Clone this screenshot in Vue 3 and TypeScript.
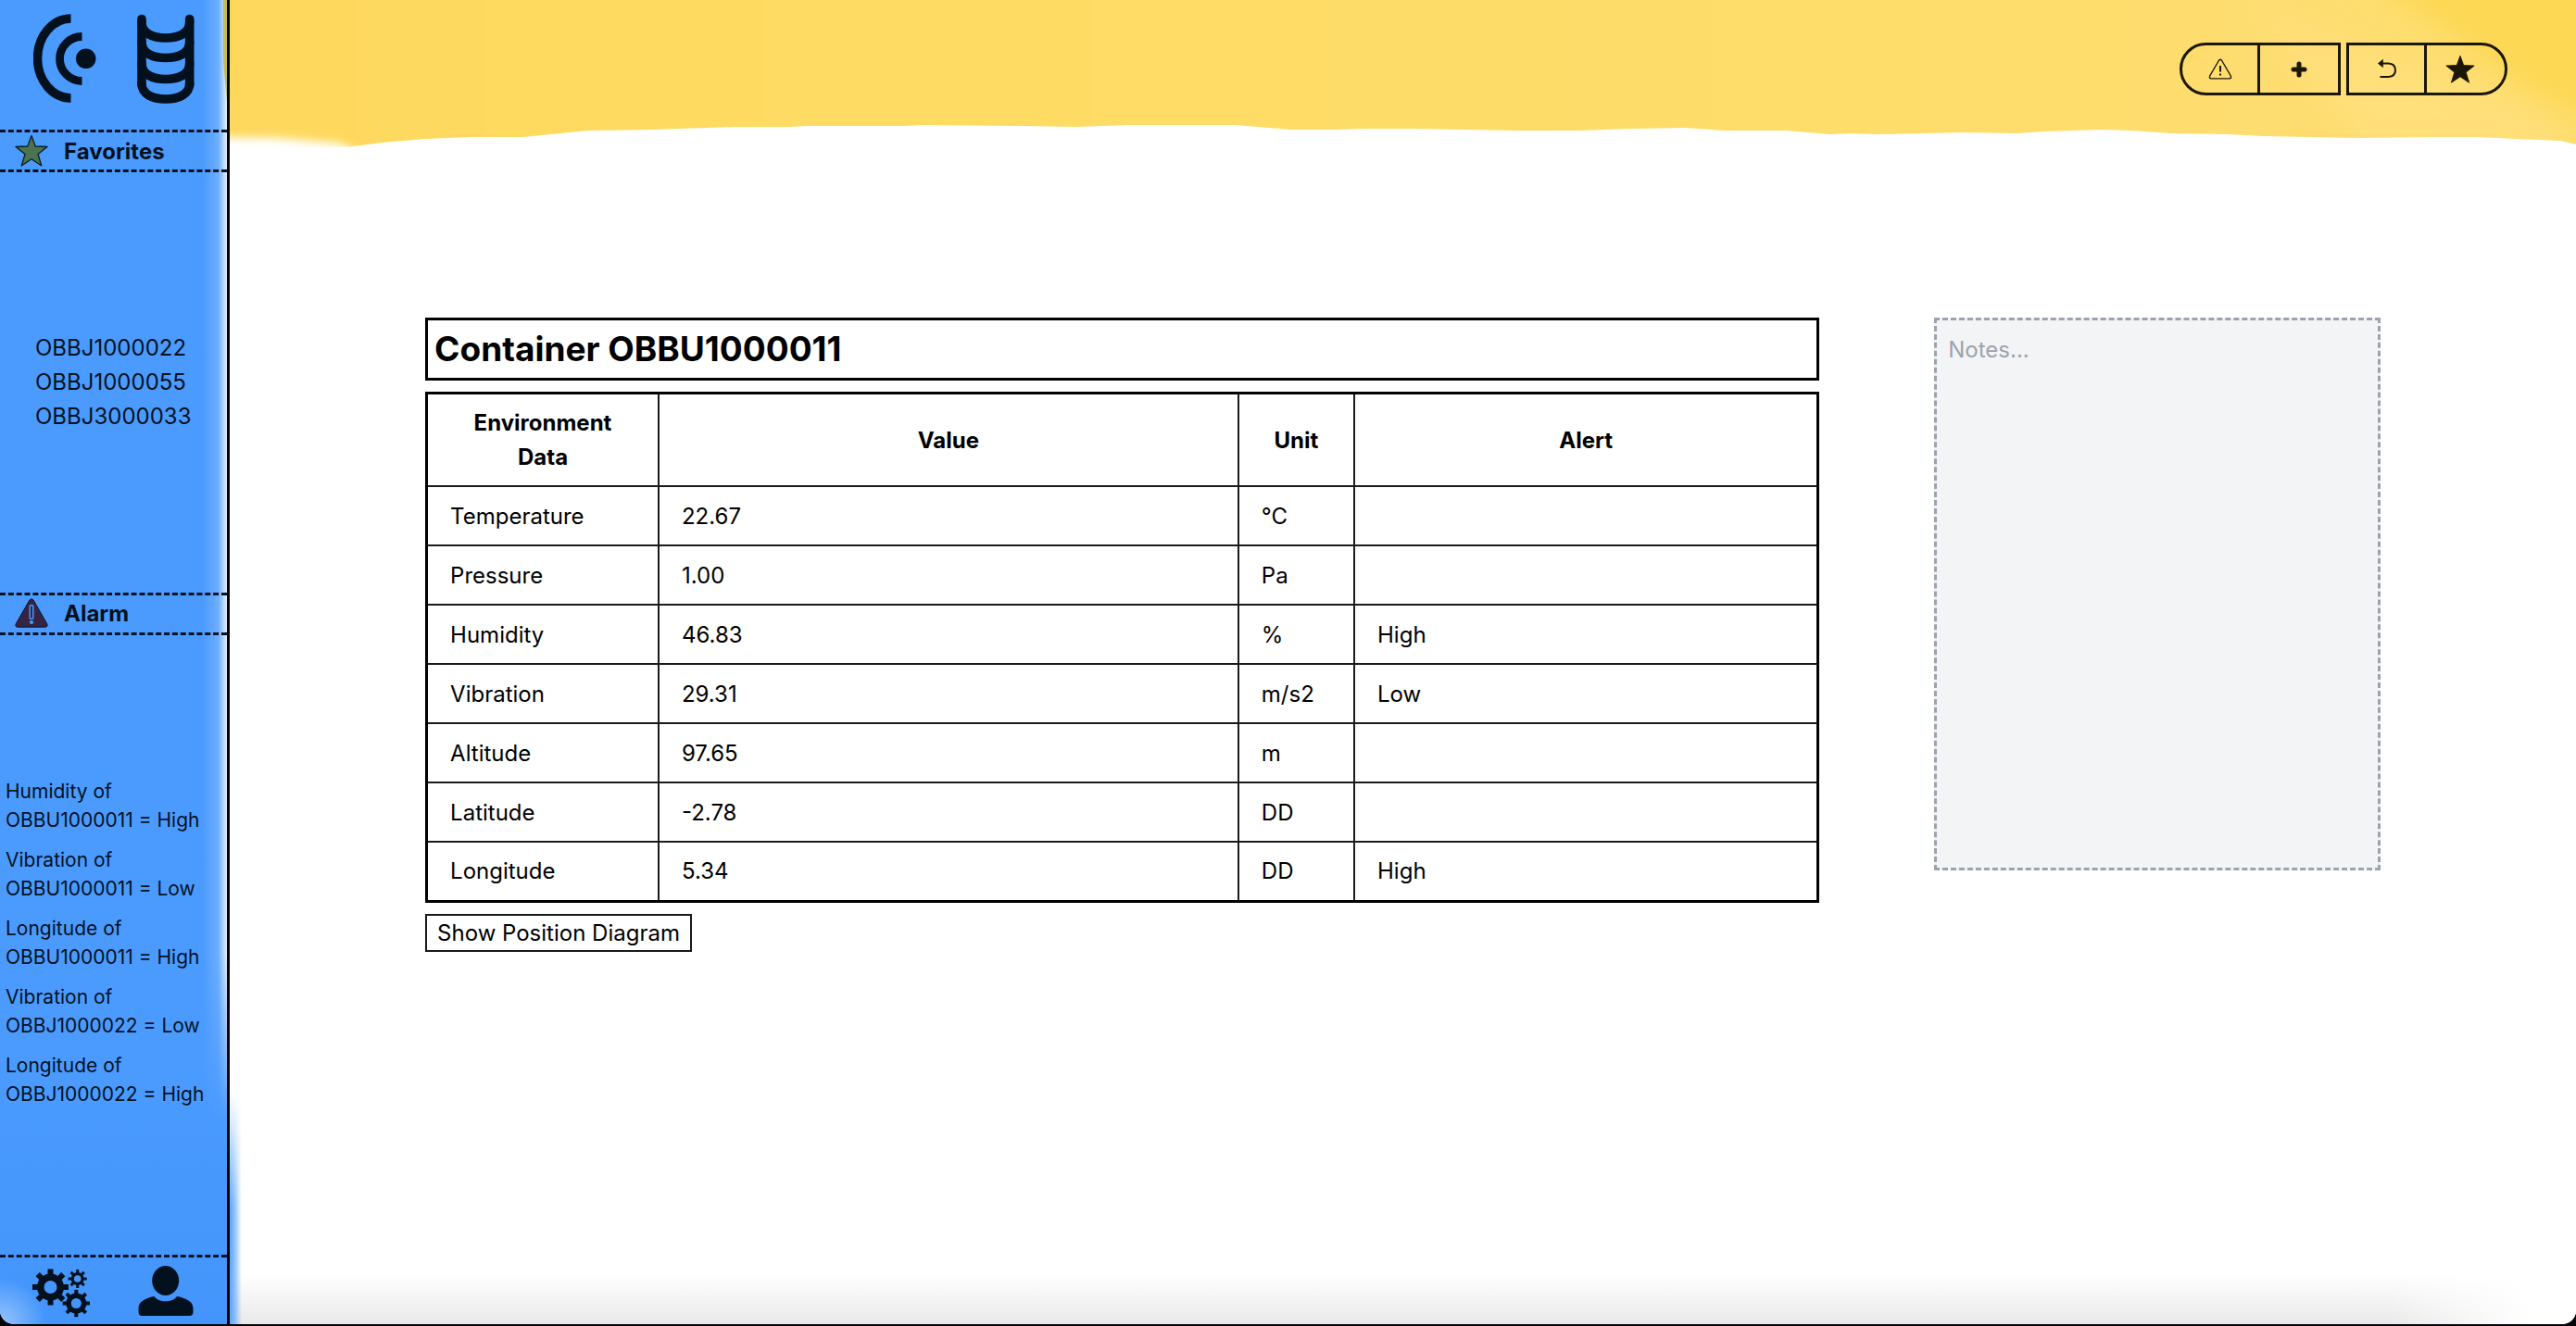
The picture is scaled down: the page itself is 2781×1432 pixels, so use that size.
<script setup lang="ts">
import { ref } from 'vue'

interface Reading {
  name: string
  value: string
  unit: string
  alert: string
}

interface Gear {
  cx: number
  cy: number
  body: number
  outer: number
  hole: number
  tooth: number
}

const containerId = 'OBBU1000011'
const notes = ref('')

const favorites: string[] = ['OBBJ1000022', 'OBBJ1000055', 'OBBJ3000033']

const alarms: { metric: string; id: string; level: string }[] = [
  { metric: 'Humidity', id: 'OBBU1000011', level: 'High' },
  { metric: 'Vibration', id: 'OBBU1000011', level: 'Low' },
  { metric: 'Longitude', id: 'OBBU1000011', level: 'High' },
  { metric: 'Vibration', id: 'OBBJ1000022', level: 'Low' },
  { metric: 'Longitude', id: 'OBBJ1000022', level: 'High' },
]

const readings: Reading[] = [
  { name: 'Temperature', value: '22.67', unit: '°C', alert: '' },
  { name: 'Pressure', value: '1.00', unit: 'Pa', alert: '' },
  { name: 'Humidity', value: '46.83', unit: '%', alert: 'High' },
  { name: 'Vibration', value: '29.31', unit: 'm/s2', alert: 'Low' },
  { name: 'Altitude', value: '97.65', unit: 'm', alert: '' },
  { name: 'Latitude', value: '-2.78', unit: 'DD', alert: '' },
  { name: 'Longitude', value: '5.34', unit: 'DD', alert: 'High' },
]

const gears: Gear[] = [
  { cx: 19.5, cy: 23, body: 14.5, outer: 19.5, hole: 7, tooth: 6 },
  { cx: 48.7, cy: 14, body: 7, outer: 10, hole: 3.8, tooth: 3 },
  { cx: 47.3, cy: 40.5, body: 11, outer: 14.7, hole: 5.5, tooth: 4 },
]

const teeth = [0, 45, 90, 135]
const barrelLevels = [29, 50.5, 73.5, 95]
</script>

<template>
  <div class="app">
    <aside class="sidebar">
      <nav class="nav-top">
        <button class="icon-btn" aria-label="Sensors">
          <svg width="68" height="102" viewBox="0 0 68 102" fill="none" stroke="currentColor">
            <path d="M40.5 8 A36 43 0 0 0 40.5 94" stroke-width="9.5" />
            <path d="M52.5 27.5 A24 24 0 0 0 52.5 75.5" stroke-width="8.8" />
            <circle cx="56.7" cy="51.3" r="10.8" fill="currentColor" stroke="none" />
          </svg>
        </button>
        <button class="icon-btn" aria-label="Containers">
          <svg width="62" height="102" viewBox="0 0 62 102" fill="none" stroke="currentColor" stroke-width="9.6" stroke-linecap="round">
            <path d="M5 8.5 V80 M56.7 8.5 V80" />
            <path
              v-for="y in barrelLevels"
              :key="y"
              :d="`M5 ${y - 17} C5 ${y - 5} 17 ${y} 30.8 ${y} S56.7 ${y - 5} 56.7 ${y - 17}`"
            />
          </svg>
        </button>
      </nav>

      <h2 class="band">
        <svg width="36" height="36" viewBox="0 0 36 36">
          <path
            d="M18 1.5 L22.2 13 L35 13.5 L25 21.5 L28.8 34 L18 26.8 L7.2 34 L11 21.5 L1 13.5 L13.8 13 Z"
            fill="#4c7350" stroke="#0b1c22" stroke-width="1.3" stroke-linejoin="round"
          />
        </svg>
        Favorites
      </h2>
      <div class="list-area favorites">
        <ul>
          <li v-for="id in favorites" :key="id">{{ id }}</li>
        </ul>
      </div>

      <h2 class="band">
        <svg width="36" height="36" viewBox="0 0 36 36">
          <path
            d="M15.8 3.2 Q18 .2 20.2 3.2 L34.8 28.8 Q36 32 32.8 32.2 H3.2 Q0 32 1.2 28.8 Z"
            fill="#352444" stroke="#0b1626" stroke-width="1"
          />
          <rect x="16.2" y="8.8" width="3.6" height="14.5" rx="1" fill="#352444" stroke="#4c9dff" stroke-width="1.4" />
          <circle cx="18" cy="27" r="2.1" fill="#4c9dff" />
        </svg>
        Alarm
      </h2>
      <div class="list-area alarms">
        <ul>
          <li v-for="(a, i) in alarms" :key="i">
            {{ a.metric }} of<br />{{ a.id }} = {{ a.level }}
          </li>
        </ul>
      </div>

      <nav class="nav-bottom">
        <button class="icon-btn" aria-label="Settings">
          <svg width="62" height="56" viewBox="0 0 62 56">
            <defs>
              <mask id="gear-holes">
                <rect width="62" height="56" fill="#fff" />
                <circle v-for="g in gears" :key="g.cx" :cx="g.cx" :cy="g.cy" :r="g.hole" fill="#000" />
              </mask>
            </defs>
            <g mask="url(#gear-holes)" fill="currentColor">
              <template v-for="g in gears" :key="g.cx">
                <circle :cx="g.cx" :cy="g.cy" :r="g.body" />
                <rect
                  v-for="t in teeth"
                  :key="t"
                  :x="g.cx - g.tooth / 2"
                  :y="g.cy - g.outer"
                  :width="g.tooth"
                  :height="g.outer * 2"
                  :transform="`rotate(${t} ${g.cx} ${g.cy})`"
                />
              </template>
            </g>
          </svg>
        </button>
        <button class="icon-btn" aria-label="Account">
          <svg width="60" height="56" viewBox="0 0 60 56" fill="currentColor">
            <ellipse cx="29.7" cy="16" rx="14.5" ry="16" />
            <path d="M17.5 33 C22 40 37.5 40 42 33 C53 35 59.5 39 59.5 46 V50 Q59.5 54 55.5 54 H4.5 Q.5 54 .5 50 V46 C.5 39 7 35 17.5 33 Z" />
          </svg>
        </button>
      </nav>
    </aside>

    <div class="page">
      <header class="topbar">
        <svg class="paint" viewBox="0 0 2533 160" preserveAspectRatio="none" aria-hidden="true">
          <defs>
            <linearGradient id="wash">
              <stop offset="0" stop-color="#fed85c" />
              <stop offset=".3" stop-color="#fedb63" />
              <stop offset=".7" stop-color="#fedd6b" />
              <stop offset="1" stop-color="#fede72" />
            </linearGradient>
            <filter id="soft" x="-10%" y="-50%" width="120%" height="200%">
              <feGaussianBlur stdDeviation="5" />
            </filter>
            <filter id="softer" x="-20%" y="-50%" width="140%" height="200%">
              <feGaussianBlur stdDeviation="14" />
            </filter>
            <clipPath id="edge">
              <path
                d="M0 0 H2533 V156 L2516 152 L2426 148 L2374 148 L2299 149 L2195 147 L2157 145 L2096 144 L2053 141 L2020 140 L1959 142 L1930 144 L1874 143 L1779 145 L1751 144 L1727 145 L1680 141 L1614 141 L1571 138 L1510 139 L1458 141 L1392 141 L1279 139 L1222 139 L1194 140 L1146 140 L1086 135 L971 135 L914 137 L857 136 L749 135 L726 136 L623 136 L604 137 L547 137 L482 139 L455 140 L386 141 L317 148 L263 148 L210 150 L164 154 L134 158 L100 160 H0 Z"
              />
            </clipPath>
          </defs>
          <g clip-path="url(#edge)">
            <path d="M-10 -20 H2560 V190 H180 L120 155 L50 149 L-10 148 Z" fill="url(#wash)" filter="url(#soft)" />
            <path d="M2300 -30 H2600 V150 L2500 110 Z" fill="#fdd855" filter="url(#softer)" />
            <path d="M2180 0 L2480 120 L2520 160 H2300 Z" fill="#ffe184" opacity=".5" filter="url(#softer)" />
          </g>
        </svg>
        <div class="toolbar">
          <div class="group group-left">
            <button aria-label="Alerts">
              <svg width="26" height="26" viewBox="0 0 26 26" fill="none" stroke="currentColor" stroke-width="1.4">
                <path d="M11.3 3.5 Q13 1 14.7 3.5 L24.3 20 Q25.3 22.8 22.8 22.9 H3.2 Q.7 22.8 1.7 20 Z" />
                <path d="M13 9 V15.5 M13 17.5 V19.5" stroke-width="2" />
              </svg>
            </button>
            <button aria-label="Add">
              <svg width="26" height="26" viewBox="0 0 26 26" stroke="currentColor" stroke-width="5" stroke-linecap="round">
                <path d="M13 7 V19 M7 13 H19" />
              </svg>
            </button>
          </div>
          <div class="group group-right">
            <button aria-label="Back">
              <svg width="26" height="26" viewBox="0 0 26 26" fill="none" stroke="currentColor" stroke-width="2">
                <path d="M8 6.500 H14.500 Q22 7 22 13.700 T14.500 21 H5.500" />
                <path d="M3 6.500 L8.800 1.700 V11.300 Z" fill="currentColor" stroke="none" />
              </svg>
            </button>
            <button aria-label="Favorite">
              <svg width="32" height="32" viewBox="0 0 36 36" fill="currentColor" stroke="currentColor" stroke-linejoin="round">
                <path d="M18 1.5 L22.2 13 L35 13.5 L25 21.5 L28.8 34 L18 26.8 L7.2 34 L11 21.5 L1 13.5 L13.8 13 Z" />
              </svg>
            </button>
          </div>
        </div>
      </header>

      <main class="content">
        <section class="details">
          <h1>Container {{ containerId }}</h1>
          <table>
            <colgroup>
              <col class="c-name" />
              <col class="c-value" />
              <col class="c-unit" />
              <col class="c-alert" />
            </colgroup>
            <thead>
              <tr>
                <th scope="col">Environment Data</th>
                <th scope="col">Value</th>
                <th scope="col">Unit</th>
                <th scope="col">Alert</th>
              </tr>
            </thead>
            <tbody>
              <tr v-for="r in readings" :key="r.name">
                <td>{{ r.name }}</td>
                <td>{{ r.value }}</td>
                <td>{{ r.unit }}</td>
                <td>{{ r.alert }}</td>
              </tr>
            </tbody>
          </table>
          <button class="diagram-btn">Show Position Diagram</button>
        </section>
        <textarea v-model="notes" class="notes" placeholder="Notes..." aria-label="Notes"></textarea>
      </main>
    </div>
  </div>
</template>

<style>
body {
  margin: 0;
  background: #05070a;
}
</style>

<style scoped>
* {
  box-sizing: border-box;
}

.app {
  display: flex;
  min-height: calc(100vh - 2px);
  margin-bottom: 2px;
  overflow: hidden;
  border-radius: 0 0 15px 15px;
  background: #fff;
  color: #000;
  font-family: Inter, "Liberation Sans", sans-serif;
  font-size: 24px;
  line-height: 37px;
}

button {
  padding: 0;
  border: 0;
  background: none;
  color: inherit;
  font: inherit;
  cursor: pointer;
}

svg {
  display: block;
  flex: none;
}

h1,
h2,
ul {
  margin: 0;
  padding: 0;
}

ul {
  list-style: none;
}

/* Sidebar */
.sidebar {
  position: relative;
  z-index: 1;
  display: flex;
  flex: none;
  flex-direction: column;
  width: 248px;
  border-right: 3px solid #000;
  background:
    radial-gradient(circle at 0 100%, rgba(255, 255, 255, 0.45), transparent 50px),
    linear-gradient(#4b9bff 80%, #4395fb);
  color: #03111f;
}

/* Worn paint along the right edge */
.sidebar::before {
  content: "";
  position: absolute;
  z-index: -1;
  inset: 0 0 220px auto;
  width: 26px;
  background: linear-gradient(to right, transparent, rgba(255, 255, 255, 0.2) 65%, rgba(255, 255, 255, 0.85));
  mask-image: linear-gradient(#000 85%, transparent);
}

.sidebar::after {
  content: "";
  position: absolute;
  top: 0;
  right: 0;
  width: 4px;
  height: 110px;
  background: #c5bd55;
  clip-path: polygon(0 0, 100% 0, 100% 100%, 0 60%);
}

.nav-top {
  display: flex;
  gap: 44px;
  padding: 12px 36px 26px;
}

.band {
  display: flex;
  align-items: center;
  gap: 17px;
  height: 46px;
  padding-left: 16px;
  border-top: 3px dashed #03111f;
  border-bottom: 3px dashed #03111f;
  font-size: 24px;
  font-weight: 700;
}

.list-area {
  display: flex;
  flex-direction: column;
  justify-content: center;
}

.favorites {
  flex: 15 0 0;
  padding-left: 38px;
}

.alarms {
  flex: 22 0 0;
  padding: 0 0 4px 6px;
  font-size: 21px;
  line-height: 31px;
}

.alarms ul {
  display: grid;
  gap: 12px;
}

.nav-bottom {
  display: flex;
  gap: 52px;
  padding: 9px 35px 7px;
  border-top: 3px dashed #03111f;
}

/* Top bar */
.page {
  position: relative;
  display: flex;
  flex: 1;
  flex-direction: column;
  min-width: 0;
  background:
    linear-gradient(to right, transparent 92%, #fff 98%) bottom / 100% 60px no-repeat,
    linear-gradient(transparent, #e9e9e9) bottom / 100% 54px no-repeat;
}

.page::before {
  content: "";
  position: absolute;
  bottom: 0;
  left: 0;
  width: 13px;
  height: 250px;
  background: linear-gradient(to right, #5ba5ff, rgba(91, 165, 255, 0.7) 40%, transparent);
  mask-image: linear-gradient(transparent, #000 50%);
}

.topbar {
  position: relative;
  display: flex;
  justify-content: flex-end;
  padding: 46px 74px 57px;
}

.paint {
  position: absolute;
  inset: 0;
  width: 100%;
  height: 100%;
}

.toolbar {
  position: relative;
  display: flex;
  gap: 6px;
  color: #1c1705;
}

.group {
  display: flex;
  width: 174px;
  height: 57px;
  border: 3px solid #1c1705;
}

.group-left {
  border-radius: 29px 0 0 29px;
}

.group-right {
  border-radius: 0 29px 29px 0;
}

.group button {
  display: grid;
  flex: 0 0 81px;
  place-items: center;
}

.group button + button {
  flex: 1;
  border-left: 3px solid #1c1705;
}

/* The rounded end pulls its glyph towards the divider */
.group-right button:last-child {
  padding-right: 13px;
}

/* Main content */
.content {
  display: grid;
  grid-template-columns: 25fr 8fr;
  gap: 124px;
  align-items: start;
  padding: 183px calc(100% / 12) 60px;
}

.details {
  display: flex;
  flex-direction: column;
  align-items: flex-start;
  gap: 12px;
}

h1 {
  width: 100%;
  padding: 9px 7px;
  border: 3px solid #000;
  font-size: 37px;
  font-weight: 700;
  line-height: 44px;
}

table {
  width: 100%;
  table-layout: fixed;
  border: 3px solid #000;
  border-collapse: collapse;
}

.c-name {
  width: 16.667%;
}

.c-value {
  width: 41.667%;
}

.c-unit {
  width: 8.333%;
}

.c-alert {
  width: 33.333%;
}

th,
td {
  height: 64px;
  padding: 12px 24px;
  border: 2px solid #1a1a1a;
  text-align: left;
}

th {
  font-weight: 700;
  text-align: center;
}

.diagram-btn {
  height: 41px;
  padding: 0 11px;
  border: 2px solid #1a1a1a;
}

.notes {
  width: 100%;
  height: 597px;
  padding: 13px 12px;
  border: 3px dashed #9ca3af;
  border-radius: 0;
  outline: none;
  background: #f3f4f6;
  color: #000;
  font: inherit;
  resize: none;
}

.notes::placeholder {
  color: #9ca3af;
  opacity: 1;
}
</style>
